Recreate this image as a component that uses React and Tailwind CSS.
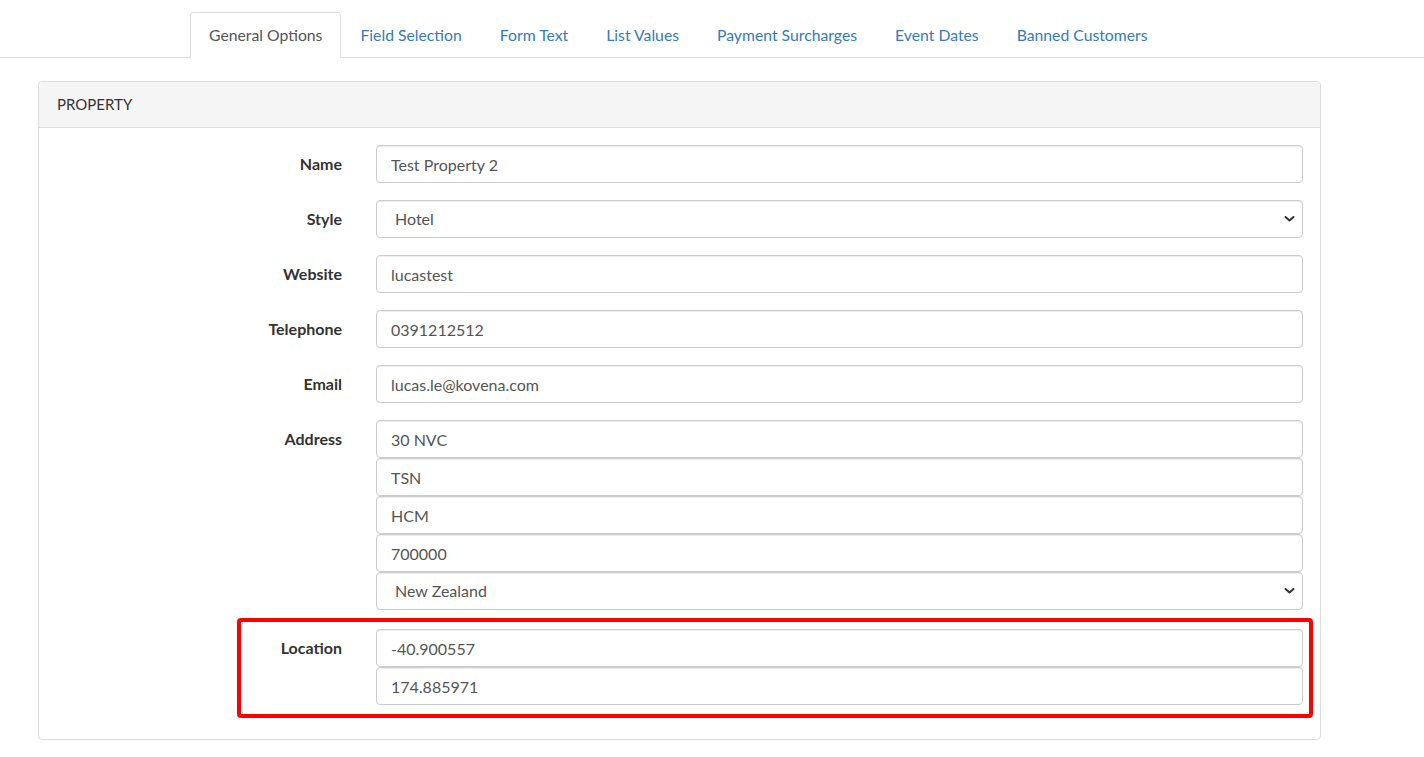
import { useState } from 'react';

const tabs = [
  'General Options',
  'Field Selection',
  'Form Text',
  'List Values',
  'Payment Surcharges',
  'Event Dates',
  'Banned Customers',
];

const inputCls =
  'block w-full h-[38px] rounded-[4px] border border-[#cccccc] bg-white px-[14px] text-[16px] text-[#555555] shadow-[inset_0_1px_1px_rgba(0,0,0,0.075)] outline-none';

const Chevron = () => (
  <svg
    className="pointer-events-none absolute right-[8px] top-1/2 -translate-y-1/2"
    width="11"
    height="7"
    viewBox="0 0 11 7"
    fill="none"
  >
    <path d="M1.5 1.5 L5.5 5 L9.5 1.5" stroke="#333" strokeWidth="2" strokeLinecap="round" strokeLinejoin="round" />
  </svg>
);

const TextInput = ({ value }) => {
  const [val, setVal] = useState(value);
  return <input className={inputCls} value={val} onChange={(e) => setVal(e.target.value)} />;
};

const SelectInput = ({ value, options }) => {
  const [val, setVal] = useState(value);
  return (
    <div className="relative">
      <select
        className={`${inputCls} appearance-none pl-[18px]`}
        value={val}
        onChange={(e) => setVal(e.target.value)}
      >
        {options.map((o) => (
          <option key={o}>{o}</option>
        ))}
      </select>
      <Chevron />
    </div>
  );
};

const FormRow = ({ label, children }) => (
  <div className="flex">
    <label className="w-[303px] shrink-0 pt-[9px] text-right text-[16px] font-bold leading-[20px] text-[#333333]">
      {label}
    </label>
    <div className="ml-[34px] flex flex-1 flex-col">{children}</div>
  </div>
);

export default function App() {
  const [active, setActive] = useState(0);

  return (
    <div className="min-h-[757px] bg-white font-['Lato','Liberation_Sans',sans-serif]">
      {/* Tabs */}
      <div className="border-b border-[#dddddd] pt-[12px] pl-[190px]">
        <ul className="-mb-px flex">
          {tabs.map((t, i) => (
            <li key={t}>
              <button
                onClick={() => setActive(i)}
                className={`rounded-t-[4px] border px-[18px] py-[11px] text-[15.75px] leading-[22px] ${
                  active === i
                    ? 'border-[#dddddd] border-b-white bg-white text-[#555555]'
                    : 'border-transparent text-[#3679c0]'
                }`}
              >
                {t}
              </button>
            </li>
          ))}
        </ul>
      </div>

      {/* Panel */}
      <div className="ml-[38px] mt-[23px] w-[1283px] rounded-[4px] border border-[#dddddd]">
        <div className="h-[46px] rounded-t-[4px] border-b border-[#dddddd] bg-[#f5f5f5] pl-[18px] pt-[12px] text-[15px] leading-[21px] text-[#333333]">
          PROPERTY
        </div>
        <div className="flex flex-col gap-[17px] pb-[34px] pr-[17px] pt-[17px]">
          <FormRow label="Name">
            <TextInput value="Test Property 2" />
          </FormRow>
          <FormRow label="Style">
            <SelectInput value="Hotel" options={['Hotel', 'Motel', 'Resort']} />
          </FormRow>
          <FormRow label="Website">
            <TextInput value="lucastest" />
          </FormRow>
          <FormRow label="Telephone">
            <TextInput value="0391212512" />
          </FormRow>
          <FormRow label="Email">
            <TextInput value="lucas.le@kovena.com" />
          </FormRow>
          <FormRow label="Address">
            <TextInput value="30 NVC" />
            <TextInput value="TSN" />
            <TextInput value="HCM" />
            <TextInput value="700000" />
            <SelectInput value="New Zealand" options={['New Zealand', 'Australia', 'Vietnam']} />
          </FormRow>
          <div className="relative mt-[2px]">
            <FormRow label="Location">
              <TextInput value="-40.900557" />
              <TextInput value="174.885971" />
            </FormRow>
            {/* annotation highlight */}
            <div className="pointer-events-none absolute bottom-[-13px] left-[198px] right-[-10px] top-[-11px] rounded-[4px] border-[4px] border-[#ff0000]" />
          </div>
        </div>
      </div>
    </div>
  );
}
